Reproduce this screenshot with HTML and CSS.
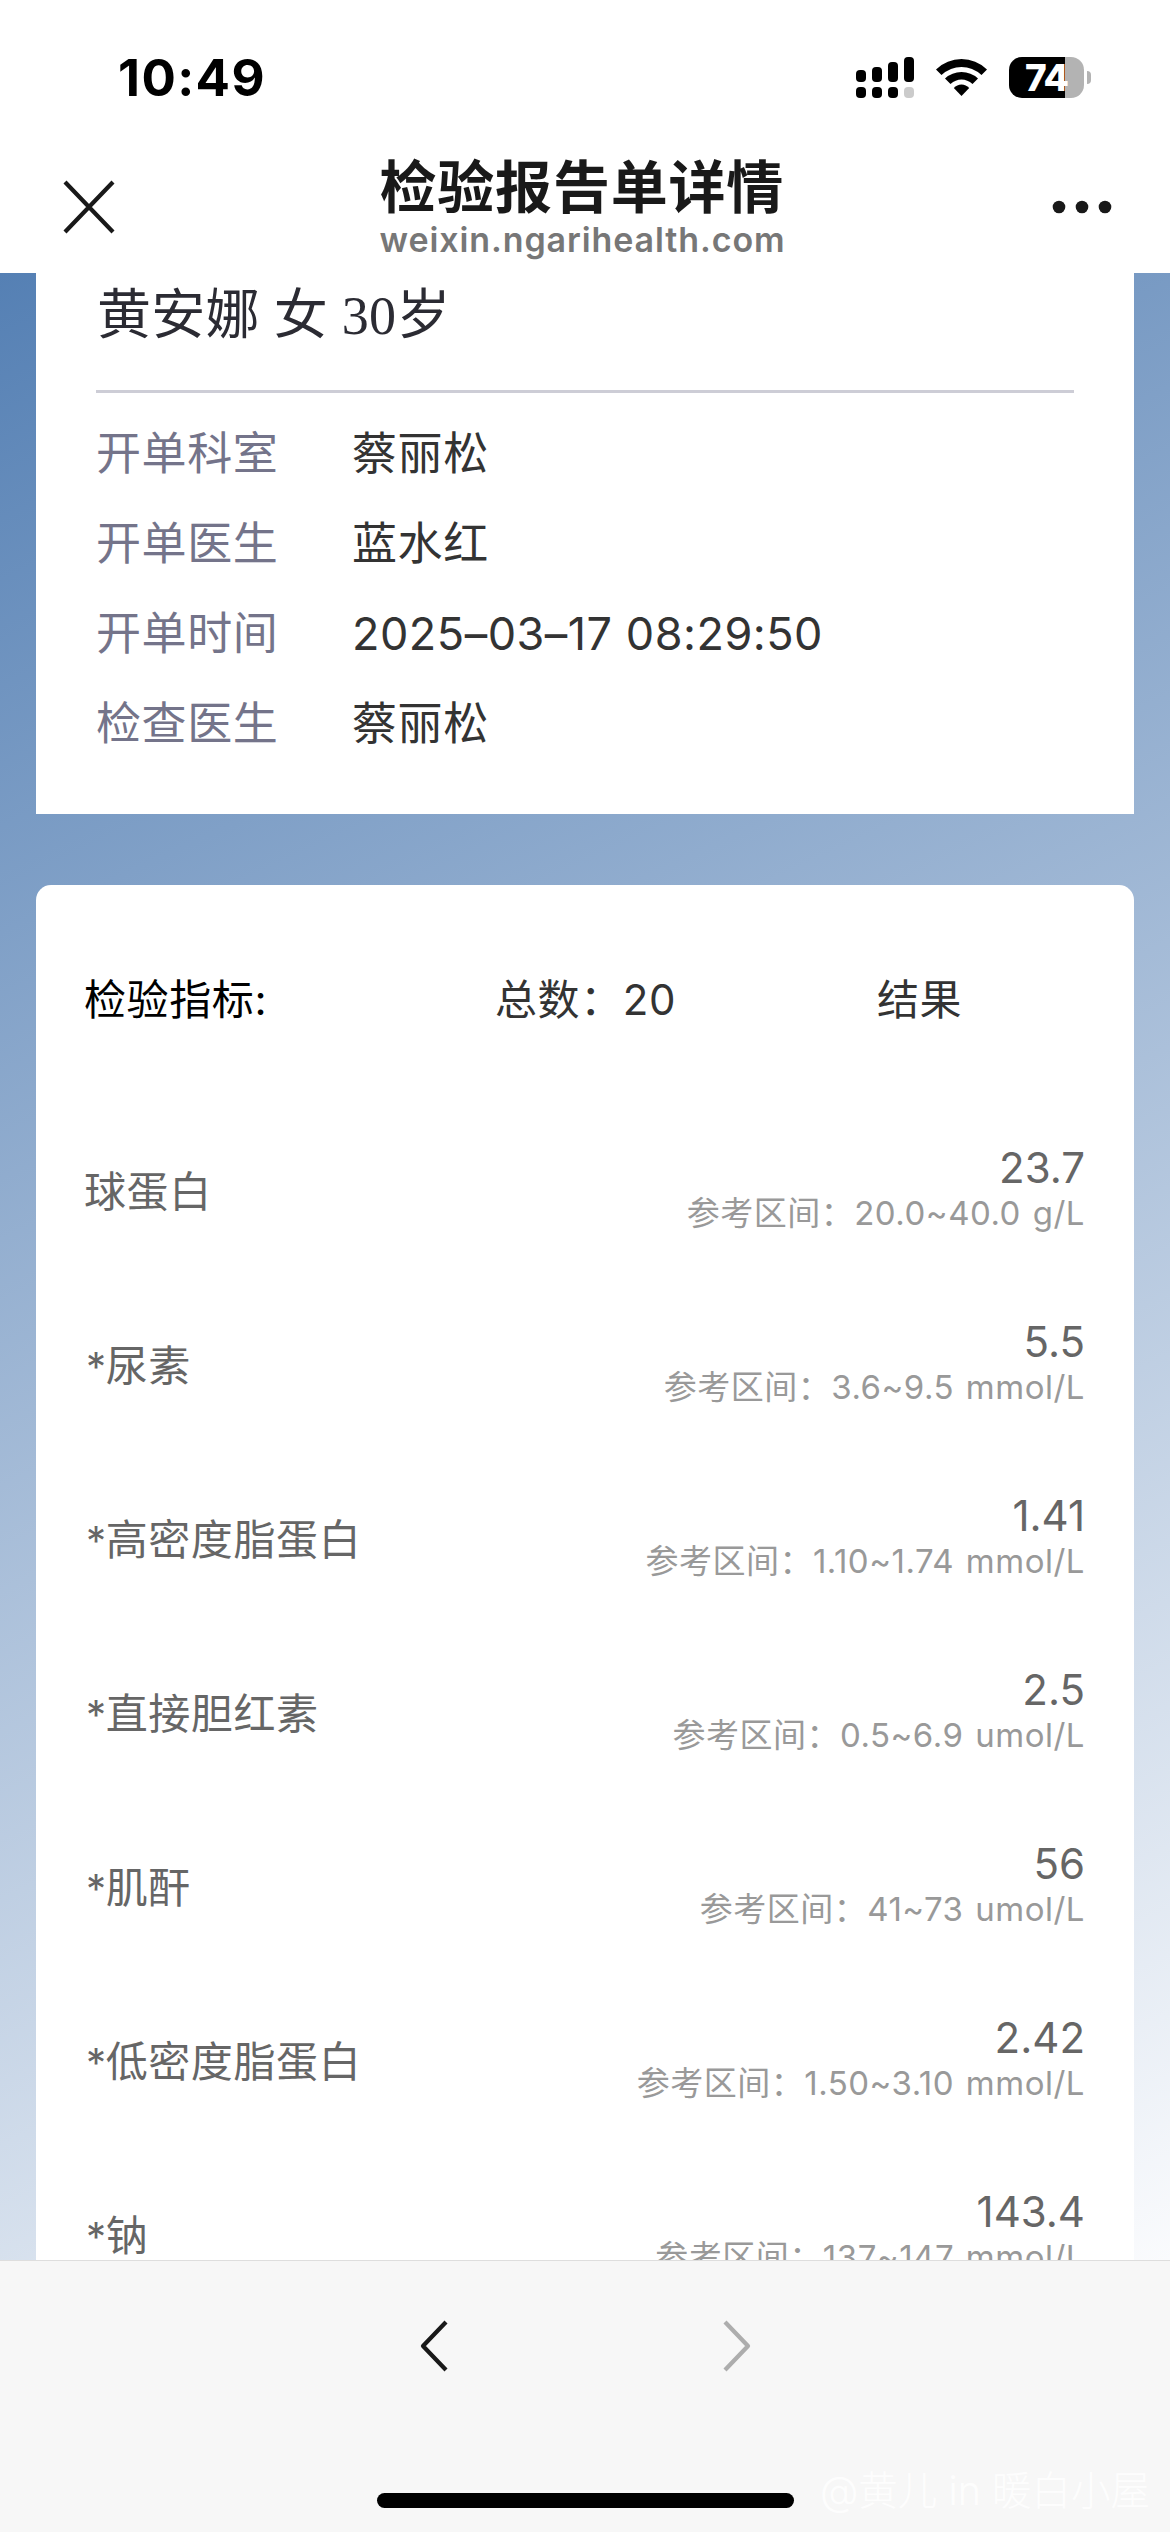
FILE: index.html
```
<!DOCTYPE html>
<html lang="zh-CN">
<head>
  <meta charset="UTF-8">
  <title>检验报告单详情</title>
  <link rel="stylesheet" href="styles.css">
</head>
<body>

  <header class="top">
    <div class="status-bar">
      <span class="time">10:49</span>
      <div class="status-icons">
        <svg class="signal" width="58" height="41" viewBox="0 0 58 41">
          <rect x="0" y="13" width="10" height="12" rx="4"/>
          <rect x="16" y="10" width="10" height="15" rx="4"/>
          <rect x="32" y="5" width="10" height="20" rx="4"/>
          <rect x="48" y="0" width="10" height="25" rx="4"/>
          <rect x="0" y="30" width="10" height="11" rx="4"/>
          <rect x="16" y="30" width="10" height="11" rx="4"/>
          <rect x="32" y="30" width="10" height="11" rx="4"/>
          <rect x="48" y="30" width="10" height="11" rx="4" fill="#cbcbcb"/>
        </svg>
        <svg class="wifi" width="51" height="37" viewBox="0 0 51 37">
          <path d="M0 10.500Q11 0 25.500 0Q40 0 51 10.500L45.500 16Q36.500 8 25.500 8Q14.500 8 5.500 16Z"/>
          <path d="M9 19.500Q16 13 25.500 13Q35 13 42 19.500L36.500 25Q31.500 20.500 25.500 20.500Q19.500 20.500 14.500 25Z"/>
          <path d="M17.800 29Q21 25.500 25.500 25.500Q30 25.500 33.200 29L25.500 37Z"/>
        </svg>
        <div class="battery"><span>74</span></div>
        <div class="battery-cap"></div>
      </div>
    </div>
    <div class="nav-bar">
      <svg width="52" height="54" viewBox="0 0 52 54" fill="none" stroke="#191919" stroke-width="4.200">
        <path d="M2 2L50 52M50 2L2 52"/>
      </svg>
      <div class="nav-title">
        <h1>检验报告单详情</h1>
        <p>weixin.ngarihealth.com</p>
      </div>
      <svg width="60" height="14" viewBox="0 0 60 14" fill="#191919">
        <circle cx="7" cy="7" r="6.300"/>
        <circle cx="30" cy="7" r="6.300"/>
        <circle cx="53" cy="7" r="6.300"/>
      </svg>
    </div>
  </header>

  <main class="content">
    <section class="card patient">
      <h2>黄安娜 女 30岁</h2>
      <dl>
        <dt>开单科室</dt><dd>蔡丽松</dd>
        <dt>开单医生</dt><dd>蓝水红</dd>
        <dt>开单时间</dt><dd class="date">2025–03–17 08:29:50</dd>
        <dt>检查医生</dt><dd>蔡丽松</dd>
      </dl>
    </section>

    <section class="card report">
      <div class="report-head">
        <span class="label">检验指标:</span>
        <span class="total">总数：20</span>
        <span>结果</span>
      </div>
      <ul>
        <li>
          <span class="name">球蛋白</span>
          <div class="result"><b>23.7</b><small>参考区间：20.0~40.0 g/L</small></div>
        </li>
        <li>
          <span class="name"><i>*</i>尿素</span>
          <div class="result"><b>5.5</b><small>参考区间：3.6~9.5 mmol/L</small></div>
        </li>
        <li>
          <span class="name"><i>*</i>高密度脂蛋白</span>
          <div class="result"><b>1.41</b><small>参考区间：1.10~1.74 mmol/L</small></div>
        </li>
        <li>
          <span class="name"><i>*</i>直接胆红素</span>
          <div class="result"><b>2.5</b><small>参考区间：0.5~6.9 umol/L</small></div>
        </li>
        <li>
          <span class="name"><i>*</i>肌酐</span>
          <div class="result"><b>56</b><small>参考区间：41~73 umol/L</small></div>
        </li>
        <li>
          <span class="name"><i>*</i>低密度脂蛋白</span>
          <div class="result"><b>2.42</b><small>参考区间：1.50~3.10 mmol/L</small></div>
        </li>
        <li>
          <span class="name"><i>*</i>钠</span>
          <div class="result"><b>143.4</b><small>参考区间：137~147 mmol/L</small></div>
        </li>
      </ul>
    </section>
  </main>

  <footer class="toolbar">
    <div class="arrows">
      <svg width="28" height="52" viewBox="0 0 28 52" fill="none" stroke="#191919" stroke-width="4.200" stroke-linejoin="round">
        <path d="M26 2L3 26L26 50"/>
      </svg>
      <svg width="28" height="52" viewBox="0 0 28 52" fill="none" stroke="#adadad" stroke-width="4.200" stroke-linejoin="round">
        <path d="M2 2L25 26L2 50"/>
      </svg>
    </div>
    <div class="home-bar"></div>
    <span class="watermark">@黄儿 in 暖白小屋</span>
  </footer>

</body>
</html>
```
FILE: styles.css
```
* {
  box-sizing: border-box;
  margin: 0;
  padding: 0;
}
body {
  width: 1170px;
  height: 2532px;
  overflow: hidden;
  display: flex;
  flex-direction: column;
  font-family: Inter, "Noto Sans CJK SC", sans-serif;
  background: #fff;
}
svg {
  display: block;
}

/* status bar + title */
.top {
  height: 273px;
  flex: none;
  background: #fff;
}
.status-bar {
  height: 155px;
  padding: 0 79px 0 118px;
  display: flex;
  justify-content: space-between;
  align-items: center;
}
.time {
  font-size: 51px;
  font-weight: 700;
  line-height: 60px;
  letter-spacing: 1.4px;
}
.status-icons {
  display: flex;
  align-items: center;
}
.wifi {
  margin: 0 22px;
}
.battery {
  width: 75px;
  height: 41px;
  border-radius: 13px;
  background: linear-gradient(to right, #000 56px, #b3b3b3 56px);
  color: #fff;
  font-size: 37px;
  font-weight: 800;
  line-height: 41px;
  text-align: center;
  letter-spacing: -1px;
}
.battery-cap {
  width: 4px;
  height: 13px;
  margin-left: 3px;
  border-radius: 0 4px 4px 0;
  background: #b3b3b3;
}
.nav-bar {
  height: 118px;
  padding: 0 58px 0 63px;
  display: flex;
  justify-content: space-between;
  align-items: flex-start;
}
.nav-bar svg {
  margin-top: 25px;
}
.nav-bar svg:last-child {
  margin-top: 45px;
}
.nav-title {
  width: 408px;
  padding-top: 1px;
  white-space: nowrap;
}
.nav-title h1 {
  font-size: 57px;
  font-weight: 700;
  line-height: 64px;
  letter-spacing: 0.8px;
  color: #191919;
}
.nav-title p {
  font-size: 34px;
  font-weight: 600;
  line-height: 40px;
  letter-spacing: 0.9px;
  color: #777;
}

/* page */
.content {
  flex: 1;
  overflow: hidden;
  padding: 0 36px;
  background: linear-gradient(155deg, #5580b4, #fafbfd);
}
.card {
  background: #fff;
}
.patient {
  height: 541px;
  padding: 0 60px;
}
.patient h2 {
  height: 120px;
  padding-left: 1px;
  border-bottom: 3px solid #cdcdd6;
  font-family: "Liberation Serif", "Noto Sans CJK SC", serif;
  font-size: 54px;
  font-weight: 400;
  line-height: 86px;
  letter-spacing: 0.3px;
  color: #2b2b33;
}
.patient dl {
  display: grid;
  grid-template-columns: 256px 1fr;
  grid-auto-rows: 90px;
  padding-top: 16px;
  font-size: 45px;
  line-height: 90px;
  letter-spacing: 0.6px;
}
.patient dt {
  color: #74748a;
}
.patient dd {
  color: #333;
}
.patient .date {
  letter-spacing: 0.5px;
}

.report {
  margin-top: 71px;
  padding: 0 49px 0 48px;
  border-radius: 15px;
}
.report-head {
  display: grid;
  grid-template-columns: 411px 382px 1fr;
  height: 216px;
  padding-top: 15px;
  font-size: 42px;
  line-height: 200px;
  letter-spacing: 0.6px;
  color: #333;
}
.report-head .label {
  color: #000;
}
.report ul {
  list-style: none;
}
.report li {
  height: 174px;
  display: flex;
  justify-content: space-between;
  align-items: center;
}
.name {
  font-size: 42px;
  letter-spacing: 0.6px;
  color: #666;
}
.name i {
  margin: 0 -1px 0 2px;
  font-style: normal;
  font-size: 40px;
}
.result {
  display: flex;
  flex-direction: column;
  align-items: flex-end;
}
.result b {
  font-size: 42px;
  font-weight: 400;
  line-height: 50px;
  color: #666;
}
.result small {
  font-size: 33px;
  line-height: 40px;
  letter-spacing: 0.5px;
  word-spacing: 2px;
  color: #999;
}

/* browser toolbar */
.toolbar {
  position: relative;
  flex: none;
  height: 272px;
  border-top: 1px solid #dedede;
  background: #f7f7f7;
}
.arrows {
  display: flex;
  justify-content: center;
  gap: 275px;
  padding-top: 59px;
}
.home-bar {
  width: 417px;
  height: 15px;
  margin: 121px auto 0;
  border-radius: 8px;
  background: #000;
}
.watermark {
  position: absolute;
  right: 20px;
  bottom: 11px;
  font-size: 39.500px;
  font-weight: 300;
  line-height: 60px;
  color: rgba(255, 255, 255, 0.8);
}
```
